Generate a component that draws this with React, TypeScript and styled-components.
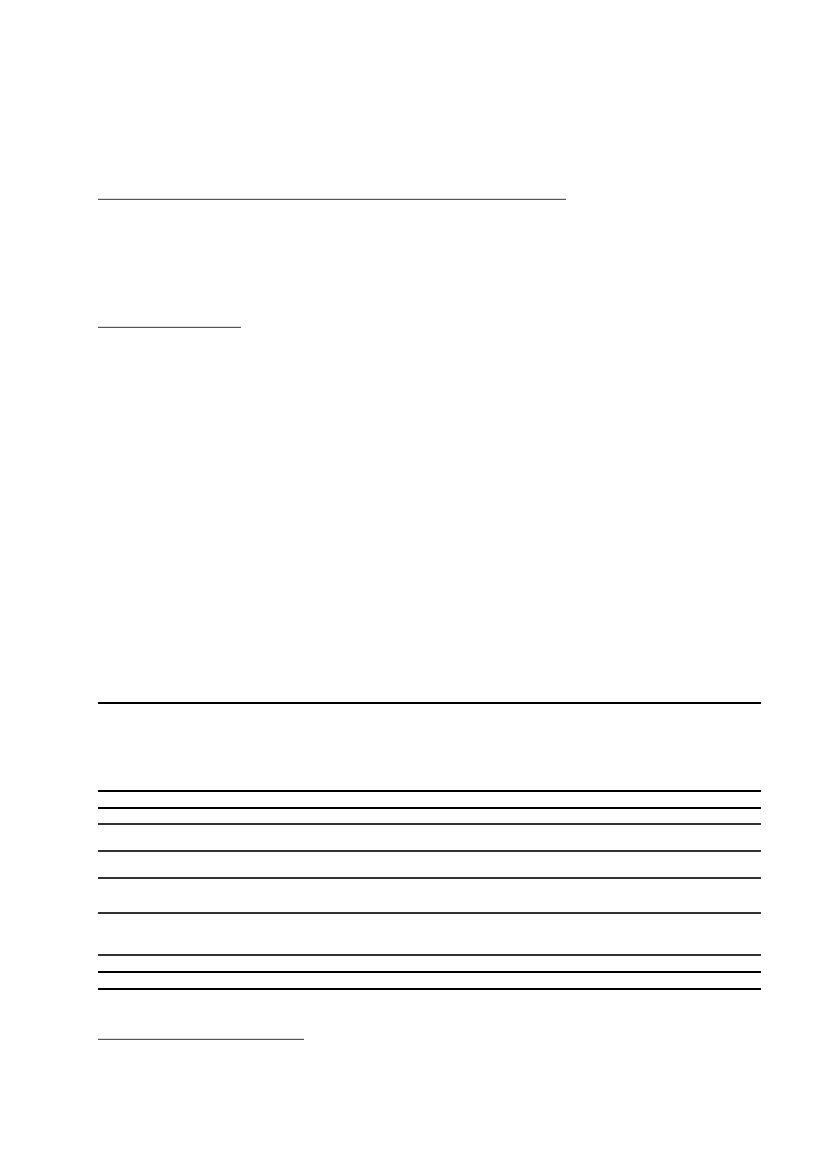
import React from "react";
import styled, { createGlobalStyle } from "styled-components";

const Global = createGlobalStyle`
  html, body {
    margin: 0;
    padding: 0;
    background: #ffffff;
    font-family: "Liberation Serif", "Times New Roman", serif;
  }
`;

const Page = styled.main`
  width: 827px;
  min-height: 1169px;
  box-sizing: border-box;
  padding: 199px 0 0 98px;
  display: flex;
  flex-direction: column;
  align-items: flex-start;
  background: #ffffff;
`;

const Rule = styled.div<{ $w: number; $gap: number }>`
  width: ${(p) => p.$w}px;
  height: 1px;
  margin-top: ${(p) => p.$gap}px;
  background: #555555;
  box-shadow: 0 -1px 0 #dcdcdc;
`;

const Table = styled.div<{ $gap: number }>`
  margin-top: ${(p) => p.$gap}px;
  width: 663px;
  display: flex;
  flex-direction: column;
  border-bottom: 2px solid #000000;
`;

const Row = styled.div<{ $h: number; $heavy?: boolean }>`
  display: grid;
  grid-template-columns: 251px 145px 162px 105px;
  height: ${(p) => p.$h}px;
  box-sizing: border-box;
  border-top: 2px solid ${(p) => (p.$heavy ? "#000000" : "#333333")};
`;

const Cell = styled.div`
  box-sizing: border-box;
  font-size: 13px;
  color: #ffffff;
`;

const rows: { h: number; heavy?: boolean }[] = [
  { h: 88, heavy: true },
  { h: 17, heavy: true },
  { h: 16, heavy: true },
  { h: 27 },
  { h: 27 },
  { h: 35 },
  { h: 42 },
  { h: 17 },
  { h: 17, heavy: true },
];

export default function App() {
  return (
    <>
      <Global />
      <Page>
        <Rule $w={468} $gap={0} />
        <Rule $w={143} $gap={127} />
        <Table $gap={374}>
          {rows.map((r, i) => (
            <Row key={i} $h={r.h} $heavy={r.heavy}>
              <Cell />
              <Cell />
              <Cell />
              <Cell />
            </Row>
          ))}
        </Table>
        <Rule $w={206} $gap={49} />
      </Page>
    </>
  );
}
